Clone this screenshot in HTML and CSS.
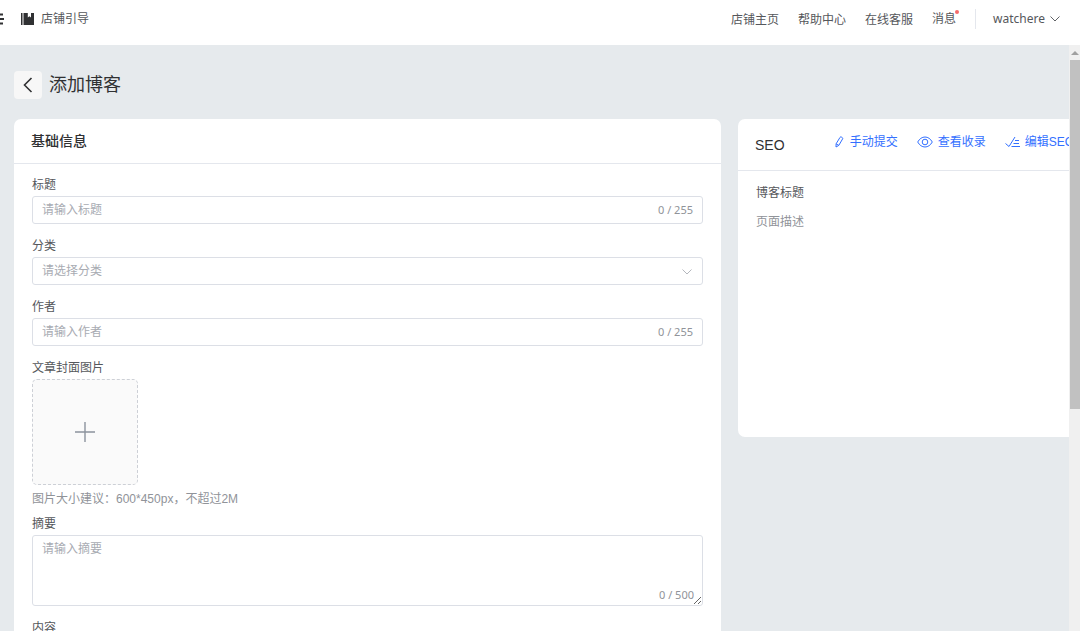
FILE: index.html
```html
<!DOCTYPE html>
<html lang="zh-CN">
<head>
<meta charset="utf-8">
<title>添加博客</title>
<link rel="stylesheet" href="styles.css">
</head>
<body>
<header class="topbar">
  <button class="menu-toggle" aria-label="菜单">
    <svg width="4" height="12" viewBox="0 0 4 12" fill="none" stroke="#303133" stroke-width="2"><path d="M0 1.5h3M0 6h4M0 10.5h3"/></svg>
  </button>
  <a class="guide" href="#">
    <svg width="13" height="12" viewBox="0 0 13 12" fill="#303133"><path d="M0 0h1.500v12H0zM2.500 0h4.300v4.500l1.600-1.300L10 4.500V0h3v12H2.500z"/></svg>
    店铺引导
  </a>
  <nav class="topnav">
    <a href="#">店铺主页</a>
    <a href="#">帮助中心</a>
    <a href="#">在线客服</a>
    <a class="messages" href="#">消息</a>
    <button class="account">watchere
      <svg width="10" height="6" viewBox="0 0 10 6" fill="none" stroke="#606266"><path d="M.5.5 5 5 9.5.5"/></svg>
    </button>
  </nav>
</header>
<div class="workspace">
  <main class="content">
    <div class="page-title">
      <button class="back" aria-label="返回">
        <svg width="10" height="16" viewBox="0 0 10 16" fill="none" stroke="#303133" stroke-width="1.6"><path d="M8.5 1 1.5 8l7 7"/></svg>
      </button>
      <h1>添加博客</h1>
    </div>
    <div class="columns">
      <form class="card">
        <h2 class="card-head">基础信息</h2>
        <div class="fields">
          <div class="field">
            <label for="title">标题</label>
            <div class="control"><input id="title" type="text" placeholder="请输入标题"><span class="count">0 / 255</span></div>
          </div>
          <div class="field">
            <label for="category">分类</label>
            <div class="control">
              <select id="category"><option>请选择分类</option></select>
              <svg class="caret" width="10" height="6" viewBox="0 0 10 6" fill="none" stroke="#b4b7bd"><path d="M.5.5 5 5 9.5.5"/></svg>
            </div>
          </div>
          <div class="field">
            <label for="author">作者</label>
            <div class="control"><input id="author" type="text" placeholder="请输入作者"><span class="count">0 / 255</span></div>
          </div>
          <div class="field field-upload">
            <label for="cover">文章封面图片</label>
            <button class="upload" id="cover" type="button" aria-label="上传图片">
              <svg width="20" height="20" viewBox="0 0 20 20" stroke="#8c939d" stroke-width="1.4"><path d="M0 10h20M10 0v20"/></svg>
            </button>
            <p class="hint">图片大小建议：600*450px，不超过2M</p>
          </div>
          <div class="field">
            <label for="summary">摘要</label>
            <div class="control control-area"><textarea id="summary" placeholder="请输入摘要"></textarea><span class="count">0 / 500</span></div>
          </div>
          <div class="field">
            <label for="body">内容</label>
            <div class="control control-area"><textarea id="body"></textarea></div>
          </div>
        </div>
      </form>
      <aside class="card seo">
        <div class="seo-head">
          <h2>SEO</h2>
          <div class="seo-links">
            <a href="#"><svg width="11" height="12" viewBox="0 0 11 12" fill="none" stroke="currentColor" stroke-linejoin="round"><path d="M6 1.400Q6.500.6 7.300 1l1 .6q.8.5.3 1.300L4.800 9.400 2 11l.1-3.200zM2.100 7.800l2.700 1.600"/></svg>手动提交</a>
            <a href="#"><svg width="16" height="12" viewBox="0 0 16 12" fill="none" stroke="currentColor"><path d="M.7 6C2.500 2.800 5 1 8 1s5.500 1.800 7.300 5C13.500 9.200 11 11 8 11S2.500 9.200.7 6z"/><circle cx="8" cy="6" r="2.800"/></svg>查看收录</a>
            <a href="#"><svg width="15" height="12" viewBox="0 0 15 12" fill="none" stroke="currentColor"><path d="M.5 7.500 4 10.500 10 1M10 4.500h4M8.500 7.500H14M6.500 10.500H15"/></svg>编辑SEO</a>
          </div>
        </div>
        <div class="seo-body">
          <p>博客标题</p>
          <p class="muted">页面描述</p>
        </div>
      </aside>
    </div>
  </main>
  <div class="scrollbar"><span class="scroll-up"></span><span class="scroll-thumb"></span></div>
</div>
</body>
</html>
```
FILE: styles.css
```css
* { box-sizing: border-box; }
body {
  margin: 0;
  height: 100vh;
  display: flex;
  flex-direction: column;
  overflow: hidden;
  font: 12px/20px "Liberation Sans", "Noto Sans CJK SC", sans-serif;
  color: #55575b;
  background: #e6eaed;
}
h1, h2, p { margin: 0; font-weight: 400; }
a { color: inherit; text-decoration: none; }
button, input, select, textarea { font: inherit; color: inherit; }
button { padding: 0; border: 0; background: none; }
svg { display: block; flex: none; }

.topbar {
  flex: none;
  height: 45px;
  padding: 9px 20px 0 0;
  display: flex;
  align-items: flex-start;
  background: #fff;
}
.menu-toggle { height: 20px; margin-right: 17px; display: flex; align-items: center; }
.guide { display: flex; align-items: center; gap: 7px; }
.topnav { margin-left: auto; display: flex; gap: 19px; line-height: 22px; }
.messages { position: relative; line-height: 20px; }
.messages::after {
  content: "";
  position: absolute;
  top: 1px;
  right: -3px;
  width: 4px;
  height: 4px;
  border-radius: 50%;
  background: #f56c6c;
}
.account {
  height: 20px;
  padding-left: 17px;
  border-left: 1px solid #e4e7ed;
  display: flex;
  align-items: center;
  gap: 5px;
  font-family: "Noto Sans", sans-serif;
}

.workspace { flex: 1; min-height: 0; display: flex; }
.content { flex: 1; min-width: 0; overflow: hidden; padding: 26px 14px 0; }
.page-title { display: flex; align-items: center; gap: 7px; margin-bottom: 20px; }
.page-title h1 { font-size: 18px; line-height: 28px; color: #303133; }
.back {
  width: 28px;
  height: 28px;
  border-radius: 4px;
  background: #f7f7f7;
  display: flex;
  align-items: center;
  justify-content: center;
}
.columns {
  display: grid;
  grid-template-columns: minmax(707px, 2fr) minmax(353px, 1fr);
  gap: 17px;
  align-items: start;
}
.card { background: #fff; border-radius: 7px; }
.card-head {
  padding: 12px 17px;
  border-bottom: 1px solid #e4e7ed;
  font-size: 14px;
  font-weight: 500;
  color: #303133;
}
.fields { padding: 11px 18px 20px; display: flex; flex-direction: column; gap: 12px; }
.field label { display: block; margin-bottom: 1px; }
.field-upload { margin-bottom: -7px; }
.control { position: relative; }
.control input, .control select, .control textarea {
  display: block;
  width: 100%;
  height: 28px;
  padding: 0 9px;
  border: 1px solid #dcdfe6;
  border-radius: 3px;
  background: #fff;
  outline: 0;
}
.control select { appearance: none; color: #a8abb2; }
.control textarea { height: 71px; padding: 3px 9px; }
::placeholder { color: #a8abb2; opacity: 1; }
.count {
  position: absolute;
  top: 4px;
  right: 10px;
  font-family: "Noto Sans", sans-serif;
  font-size: 11px;
  color: #909399;
}
.control-area .count { top: auto; bottom: 1px; right: 9px; }
.caret { position: absolute; top: 12px; right: 11px; }
.upload {
  width: 106px;
  height: 106px;
  border: 1px dashed #cdd0d6;
  border-radius: 5px;
  background: #fafafa;
  display: flex;
  align-items: center;
  justify-content: center;
}
.hint { margin-top: 4px; color: #909399; }

.seo { min-height: 318px; }
.seo-head {
  height: 52px;
  padding: 12px 17px 0;
  border-bottom: 1px solid #e4e7ed;
  display: flex;
  justify-content: space-between;
  align-items: flex-start;
}
.seo-head h2 { font-size: 14px; line-height: 28px; color: #303133; }
.seo-links { display: flex; gap: 19px; color: #3370ff; line-height: 22px; white-space: nowrap; }
.seo-links a { display: flex; align-items: center; gap: 5px; }
.seo-body { padding: 12px 18px; display: grid; gap: 9px; }
.muted { color: #909399; }

.scrollbar { flex: none; width: 11px; padding-left: 1px; background: #f0f0f0; display: flex; flex-direction: column; align-items: center; }
.scroll-up { margin: 6px 0 5px; border: 4px solid transparent; border-top: 0; border-bottom-color: #a0a0a0; }
.scroll-thumb { width: 100%; height: 59.5%; background: #c1c1c1; }
```
